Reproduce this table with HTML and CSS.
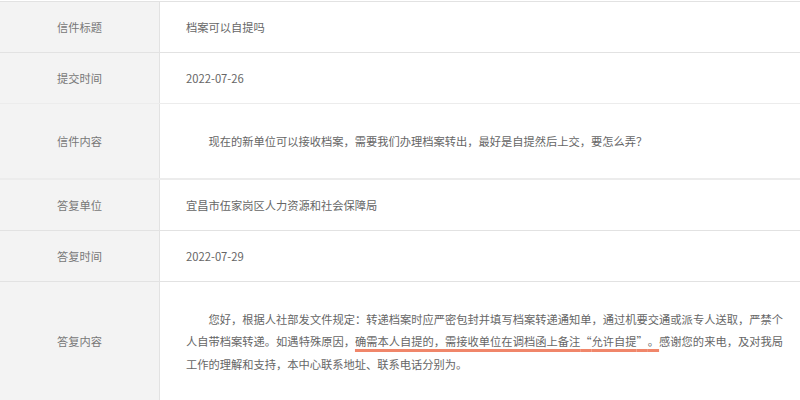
FILE: index.html
```html
<!DOCTYPE html>
<html lang="zh-CN">
  <head>
    <meta charset="utf-8">
    <link rel="stylesheet" href="styles.css">
  </head>
  <body>
    <div class="letter">
      <div class="row">
        <div class="label">信件标题</div>
        <div class="value">档案可以自提吗</div>
      </div>
      <div class="row">
        <div class="label">提交时间</div>
        <div class="value">2022-07-26</div>
      </div>
      <div class="row row-thick">
        <div class="label">信件内容</div>
        <div class="value">
          <p class="para">现在的新单位可以接收档案，需要我们办理档案转出，最好是自提然后上交，要怎么弄？</p>
        </div>
      </div>
      <div class="row">
        <div class="label">答复单位</div>
        <div class="value">宜昌市伍家岗区人力资源和社会保障局</div>
      </div>
      <div class="row">
        <div class="label">答复时间</div>
        <div class="value">2022-07-29</div>
      </div>
      <div class="row">
        <div class="label">答复内容</div>
        <div class="value">
          <p class="para">您好，根据人社部发文件规定：转递档案时应严密包封并填写档案转递通知单，通过机要交通或派专人送取，严禁个人自带档案转递。如遇特殊原因，<span class="mark">确需本人自提的，需接收单位在调档函上备注<span class="q-open">“</span>允许自提<span class="q-close">”</span>。</span>感谢您的来电，及对我局工作的理解和支持，本中心联系地址、联系电话分别为。</p>
        </div>
      </div>
    </div>
  </body>
</html>
```

FILE: styles.css
```css
body {
  margin: 0;
  background: #fff;
  font-family: "Noto Sans CJK SC", "Noto Sans", sans-serif;
  font-size: 11.25px;
  color: #666;
}

.letter {
  margin-top: 1px;
  border-top: 1px solid #e2e2e2;
}

.row {
  display: flex;
  border-bottom: 1px solid #e2e2e2;
}

.row-thick {
  border-top: 1px solid #ececec;
  border-bottom: 2px solid #ececec;
  margin-top: -1px;
}

.label {
  width: 159px;
  flex-shrink: 0;
  background: #f3f3f3;
  border-right: 1px solid #e2e2e2;
  display: flex;
  align-items: center;
  justify-content: center;
  color: #777;
  line-height: 22.5px;
}

.value {
  flex: 1;
  padding: 13.75px 17px 13.75px 26px;
  line-height: 22.5px;
  color: #666;
}

.para {
  margin: 12px 0;
  text-indent: 2em;
  text-align: justify;
}

.mark {
  text-decoration: underline 2.5px #f0866a;
  text-underline-offset: 3px;
  text-decoration-skip-ink: none;
}

.q-open,
.q-close {
  display: inline-block;
  width: 1em;
  text-indent: 0;
  text-decoration: underline 2.5px #f0866a;
  text-underline-offset: 3px;
}

.q-open {
  text-align: right;
}

.q-close {
  text-align: left;
}
```
